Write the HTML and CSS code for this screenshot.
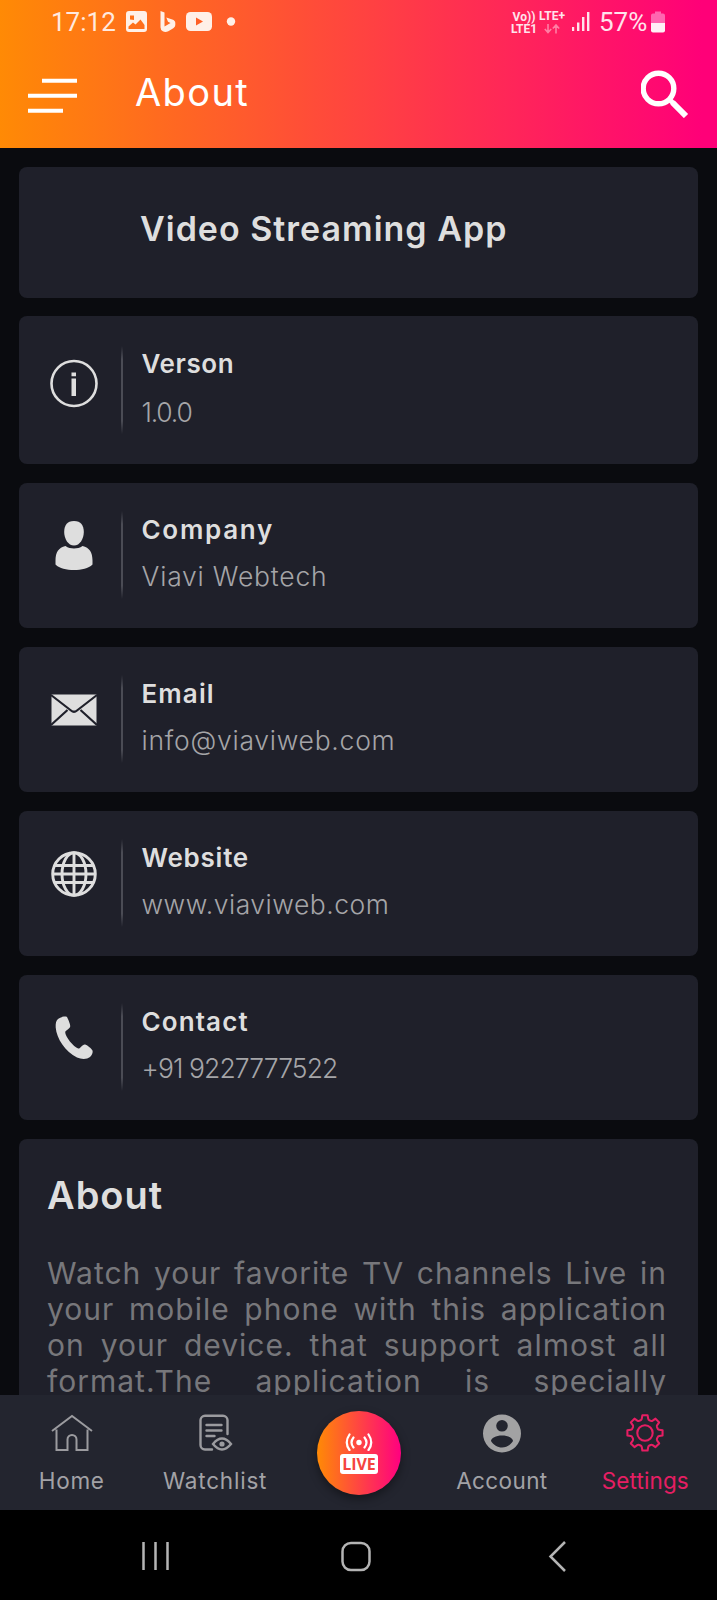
FILE: index.html
```
<!DOCTYPE html>
<html lang="en">
<head>
<meta charset="utf-8">
<title>About</title>
<link rel="stylesheet" href="styles.css">
</head>
<body>
<div class="screen">
  <header class="top">
    <div class="status">
      <span class="clock">17:12</span>
      <svg class="st-icons" width="112" height="24" viewBox="124 9 112 24">
        <path fill="#fff0e8" fill-rule="evenodd" d="M129 11h15a3 3 0 0 1 3 3v15a3 3 0 0 1-3 3h-15a3 3 0 0 1-3-3V14a3 3 0 0 1 3-3zM130 15.500v4l4 .5v-4.500zM128.500 26.500v2.500h16v-4l-4-5.500-5 5-2.500-2z"/>
        <path fill="#fff0e8" d="M160.500 11l4 1.500v14l6-3.500-2.500-1.200-1.700-4.300 6 2q3 1 3 3.500v2q0 2-2 3.300l-5 3q-3 1.500-5.500 0-2.300-1.500-2.300-4z"/>
        <rect x="186" y="12" width="26" height="19" rx="4.500" fill="#fff0e8"/>
        <path fill="#ff5f26" d="M196 17.500v8l7-4z"/>
        <circle cx="231" cy="21.500" r="4.200" fill="#fff0e8"/>
      </svg>
      <span class="lte"><span class="lte-row">Vo))</span><span class="lte-row">LTE1</span></span>
      <span class="ltep"><span class="lte-row">LTE+</span>
        <svg width="16" height="10" viewBox="0 0 16 10" fill="none" stroke="#ff7fa4" stroke-width="1.600"><path d="M4 0v8M.8 5L4 8.500 7.200 5M12 9.500v-8M8.800 4.500L12 1l3.200 3.500"/></svg>
      </span>
      <svg class="signal" width="19" height="21" viewBox="0 0 19 21" fill="#ffe3ec"><rect x="1" y="16" width="2.200" height="4"/><rect x="6" y="11.500" width="2.400" height="8.500"/><rect x="11" y="6" width="2.400" height="14"/><rect x="16" y="1" width="2.400" height="19"/></svg>
      <span class="pct">57%</span>
      <svg class="batt" width="14" height="22" viewBox="0 0 14 22"><path fill="#ff66b0" d="M4 0.500h6v2h2a2 2 0 0 1 2 2V13H0V4.500a2 2 0 0 1 2-2h2z"/><path fill="#fff0f6" d="M0 12h14v7.500a2 2 0 0 1-2 2H2a2 2 0 0 1-2-2z"/></svg>
    </div>
    <div class="bar">
      <svg class="menu" width="50" height="36" viewBox="0 0 50 36" stroke="#fff" stroke-width="4"><path d="M14 2.800h35M0 17.800h49M0 32.800h35"/></svg>
      <h1 class="title">About</h1>
      <svg class="search" width="48" height="48" viewBox="0 0 48 48" fill="none" stroke="#fff"><circle cx="17.500" cy="18.500" r="15.300" stroke-width="5.400"/><path d="M29 30l5 5" stroke-width="5"/><path d="M31.500 32.500l13.500 13.500" stroke-width="6"/></svg>
    </div>
  </header>

  <main class="list">
    <section class="card card-app"><h2 class="app-name">Video Streaming App</h2></section>

    <section class="card row row-version">
      <svg class="icon" width="50" height="50" viewBox="0 0 50 50"><circle cx="25" cy="25.500" r="22.500" fill="none" stroke="#dedede" stroke-width="2.600"/><path fill="#dedede" d="M22.500 14.500h4.500v3.700h-4.500zM22.500 20.500h4.500v17.500h-4.500z"/></svg>
      <i class="rule"></i>
      <div class="text"><h3 class="label l-version">Verson</h3><p class="value v-version">1.0.0</p></div>
    </section>

    <section class="card row">
      <svg class="icon raised" width="50" height="50" viewBox="0 0 50 50" fill="#dedede"><path d="M25 0c7 0 9.800 4.500 9.800 11 0 7-4 13.500-9.800 13.500S15.200 18 15.200 11C15.200 4.500 18 0 25 0z"/><path d="M16.500 25c2.500 1.800 5.500 2.500 8.500 2.500s6-.7 8.500-2.500C40.500 26.500 43.500 31.500 43.500 39.500v4c-4 4-11 5.500-18.500 5.500S10.500 47.500 6.500 43.500v-4c0-8 3-13 10-14.500z"/></svg>
      <i class="rule"></i>
      <div class="text"><h3 class="label l-company">Company</h3><p class="value v-company">Viavi Webtech</p></div>
    </section>

    <section class="card row">
      <svg class="icon raised" width="50" height="50" viewBox="0 0 50 50"><rect x="2.500" y="9.500" width="45" height="31" fill="#dedede"/><path d="M2 10l20 15.500q3 2.500 6 0l20-15.500M2 40l16.500-15M48 40L31.500 25" fill="none" stroke="#1f202a" stroke-width="2.200"/></svg>
      <i class="rule"></i>
      <div class="text"><h3 class="label l-email">Email</h3><p class="value v-email">info@viaviweb.com</p></div>
    </section>

    <section class="card row">
      <svg class="icon" width="50" height="50" viewBox="0 0 50 50" fill="none" stroke="#dedede" stroke-width="2.900"><circle cx="25" cy="24" r="21.300"/><ellipse cx="25" cy="24" rx="12" ry="21.300"/><path d="M25 3v42M3.500 24h43M6 15.500h38M6 32.500h38"/></svg>
      <i class="rule"></i>
      <div class="text"><h3 class="label l-website">Website</h3><p class="value v-website">www.viaviweb.com</p></div>
    </section>

    <section class="card row">
      <svg class="icon" width="50" height="50" viewBox="0 0 50 50" fill="#dedede"><path d="M9 5C12 3 16 2 18 3c1.500 3 3.500 7.500 3.200 9.500-.2 2-4.700 4-5 5.500-.2 4.500 8.500 15 13 16.500 2 .5 4.300-4.500 6.800-4 2 .5 6.500 4 7.500 6 .7 2-.5 4.500-2.500 6.500-3 2.500-8.500 2.500-13 .5C16.500 38 7.500 24.500 6.700 13.500 6.500 9.500 7 6.500 9 5z"/></svg>
      <i class="rule"></i>
      <div class="text"><h3 class="label l-contact">Contact</h3><p class="value v-contact">+91 9227777522</p></div>
    </section>

    <section class="card about">
      <h2 class="about-title">About</h2>
      <p class="about-text">
        <span class="line">Watch your favorite TV channels Live in</span>
        <span class="line">your mobile phone with this application</span>
        <span class="line">on your device. that support almost all</span>
        <span class="line">format.The application is specially</span>
      </p>
    </section>
  </main>

  <nav class="tabs">
    <a class="tab">
      <svg width="44" height="44" viewBox="0 0 44 44" fill="none" stroke="#9b9b9f" stroke-width="2"><path d="M2 20L22 5l20 15M6.500 18.500V39H17.500V28.500a4.500 4.500 0 0 1 9 0V39H37.500V18.500"/></svg>
      <span class="tab-label t-home">Home</span>
    </a>
    <a class="tab">
      <svg width="44" height="44" viewBox="0 0 44 44" fill="none" stroke="#9b9b9f" stroke-width="2.400" stroke-linecap="round"><path d="M19 38.500h-7a4.500 4.500 0 0 1-4.500-4.500V9A4.500 4.500 0 0 1 12 4.800h18a4.500 4.500 0 0 1 4.500 4.200V23M13.500 14h15M13.500 19.500h15M13.500 25h8"/><path d="M20 33q9-11 18 0-9 11-18 0z"/><circle cx="29" cy="33" r="2.600" fill="#9b9b9f" stroke="none"/></svg>
      <span class="tab-label t-watch">Watchlist</span>
    </a>
    <a class="tab">
      <span class="live">
        <svg width="40" height="18" viewBox="0 0 40 18" fill="none" stroke="#fff" stroke-width="2.200" stroke-linecap="round"><circle cx="20" cy="9.500" r="2.700" fill="#fff" stroke="none"/><path d="M14.500 4.500q-4 5 0 10M25.500 4.500q4 5 0 10M10.500 1.500q-5.500 8 0 15.500M29.500 1.500q5.500 8 0 15.500"/></svg>
        <span class="live-box">LIVE</span>
      </span>
    </a>
    <a class="tab">
      <svg width="44" height="44" viewBox="0 0 44 44"><path fill="#a2a2a3" fill-rule="evenodd" d="M22 3.500a19 19 0 1 1 0 38 19 19 0 0 1 0-38zM22 9a5.800 5.800 0 1 0 0 11.600 5.800 5.800 0 0 0 0-11.600zM22 24.500c-6 0-11 2.500-11 5.500 2.500 4 6.500 6.500 11 6.500s8.500-2.500 11-6.500c0-3-5-5.500-11-5.500z"/></svg>
      <span class="tab-label t-account">Account</span>
    </a>
    <a class="tab active">
      <svg width="44" height="44" viewBox="0 0 44 44" fill="none" stroke="#e61e63" stroke-width="2.200" stroke-linejoin="round"><g transform="translate(1.300 1.300) scale(.94)"><path d="M19.200 3.200h5.600l.6 3.600q.2 1.200 1.300 1.700l1.500.6q1.100.4 2-.2l3-2.100 3.900 3.900-2.100 3q-.6.900-.2 2l.6 1.500q.5 1.100 1.700 1.300l3.600.6v5.600l-3.600.6q-1.200.2-1.700 1.300l-.6 1.500q-.4 1.100.2 2l2.100 3-3.900 3.900-3-2.100q-.9-.6-2-.2l-1.500.6q-1.100.5-1.300 1.700l-.6 3.600h-5.600l-.6-3.600q-.2-1.200-1.300-1.700l-1.500-.6q-1.100-.4-2 .2l-3 2.100-3.900-3.900 2.100-3q.6-.9.200-2l-.6-1.500q-.5-1.100-1.700-1.300l-3.600-.6v-5.600l3.600-.6q1.200-.2 1.700-1.300l.6-1.500q.4-1.100-.2-2l-2.100-3 3.900-3.900 3 2.100q.9.600 2 .2l1.500-.6q1.100-.5 1.300-1.700z"/><circle cx="22" cy="22" r="8.200"/></g></svg>
      <span class="tab-label t-settings">Settings</span>
    </a>
  </nav>

  <div class="sysnav">
    <svg width="717" height="90" viewBox="0 1510 717 90" fill="none" stroke="#b4b4b4" stroke-width="2.500"><path d="M143.500 1542v28M155.500 1542v28M167.500 1542v28M565 1542l-14.500 14.500L565 1571"/><rect x="342.500" y="1543" width="27" height="27" rx="8.500"/></svg>
  </div>
</div>
</body>
</html>
```

FILE: styles.css
```
* { box-sizing: border-box; margin: 0; padding: 0; }
body { background: #0a0b0f; font-family: Inter, "Open Sans", sans-serif; }
.screen { width: 717px; height: 1600px; display: flex; flex-direction: column; overflow: hidden; background: #0a0b0f; }

.top { height: 148px; flex: none; background: linear-gradient(90deg, #ff8a05 0%, #ff0078 98%); }
.status { height: 44px; display: flex; align-items: flex-start; padding-left: 51px; font-family: Roboto, sans-serif; color: #ffe9df; }
.clock { width: 73px; font-size: 26px; line-height: 30px; margin-top: 7px; }
.st-icons { margin-top: 9px; margin-right: 274px; }
.lte, .ltep { font-size: 12px; font-weight: 700; line-height: 12px; display: flex; flex-direction: column; align-items: center; color: #ffe3ec; }
.lte { width: 28px; margin-top: 11px; }
.ltep { width: 28px; margin-top: 10px; gap: 2px; }
.signal { margin: 11px 0 0 5px; }
.pct { font-size: 26px; line-height: 30px; margin: 7px 0 0 9px; width: 52px; color: #ffe3ec; }
.batt { margin-top: 11px; }
.bar { height: 104px; display: flex; align-items: flex-start; padding: 26px 28px 0 28px; }
.menu { margin-top: 8px; }
.title { font-size: 38px; font-weight: 400; line-height: 44px; color: #fff; margin: 0 0 0 57px; flex: 1; letter-spacing: 1.400px; }

.list { flex: none; height: 1247px; overflow: hidden; padding: 19px 19px 0; display: flex; flex-direction: column; gap: 18.500px; }
.card { flex: none; background: #1f202a; border-radius: 8px; color: #dedede; }
.card-app { height: 130.500px; padding: 42px 0 0 121px; }
.app-name { font-size: 34px; font-weight: 600; line-height: 40px; white-space: nowrap; letter-spacing: 1px; }
.row { height: 145.500px; display: flex; padding: 28px 0 0 30px; }
.row-version { height: 148px; padding-top: 30px; }
.icon { margin-top: 11px; flex: none; }
.icon.raised { margin-top: 10px; }
.row-version .icon { margin-top: 12px; }
.rule { width: 2px; height: 88px; margin: 0 18.500px 0 22px; background: linear-gradient(#1f202a, #4b4c55 15%, #4b4c55 85%, #1f202a); }
.text { display: flex; flex-direction: column; }
.label { font-size: 26px; font-weight: 600; line-height: 30px; margin-top: 4px; white-space: nowrap; width: max-content; }
.value { font-size: 26.500px; font-weight: 350; line-height: 30px; margin-top: 16px; color: #a5a5a8; white-space: nowrap; width: max-content; }
.l-version { margin-top: 3px; letter-spacing: .6px; }
.v-version { margin-top: 18px; letter-spacing: -1.200px; }
.l-company { letter-spacing: 1.700px; }
.v-company { letter-spacing: .8px; }
.l-email { letter-spacing: 1.100px; }
.v-email { letter-spacing: .75px; }
.l-website { letter-spacing: .75px; }
.v-website { letter-spacing: .5px; }
.l-contact { letter-spacing: 1.100px; }
.v-contact { letter-spacing: -.9px; }
.about { height: 300px; padding: 34px 32px 0 28px; }
.about-title { font-size: 38px; font-weight: 600; line-height: 44px; letter-spacing: 1px; }
.about-text { font-size: 30px; line-height: 36px; color: #77777b; margin-top: 38px; font-weight: 400; letter-spacing: 1px; }
.line { display: block; margin-right: -1px; text-align: justify; text-align-last: justify; white-space: nowrap; }

.tabs { flex: none; height: 115px; background: #23252f; display: grid; grid-template-columns: repeat(5, 1fr); }
.tab { display: flex; flex-direction: column; align-items: center; padding-top: 16px; color: #a2a2a6; }
.tab-label { font-size: 22.500px; line-height: 28px; margin-top: 12px; white-space: nowrap; }
.t-home { letter-spacing: .7px; }
.t-watch { letter-spacing: .8px; }
.t-account { letter-spacing: .4px; }
.t-settings { letter-spacing: .1px; }
.active { color: #e61e63; }
.live { width: 84px; height: 84px; margin-left: 1px; border-radius: 50%; background: linear-gradient(90deg, #ff8a05, #ff0080); box-shadow: 0 4px 10px rgba(0,0,0,.4); display: flex; flex-direction: column; align-items: center; padding-top: 22px; gap: 3px; }
.live-box { width: 38px; height: 20px; border-radius: 3px; background: #fff; color: #f5443f; font: 700 16px/20px "Open Sans", sans-serif; text-align: center; }
.sysnav { flex: none; height: 90px; background: #000; }
.sysnav svg { display: block; }
```
